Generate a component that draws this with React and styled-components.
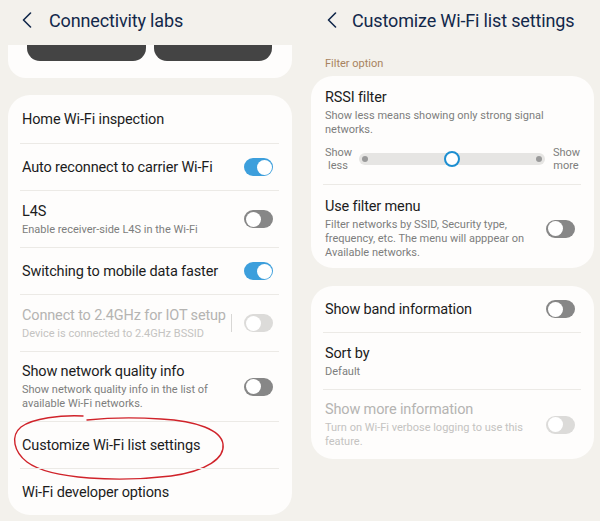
import React from 'react';
import styled, { createGlobalStyle } from 'styled-components';

/* CSS---------------------------------------------------------------------*/
const GlobalStyle = createGlobalStyle`
  html, body {
    margin: 0;
    padding: 0;
    background: #f3f1ec;
  }
  body {
    font-family: Roboto, "Noto Sans", sans-serif;
    -webkit-font-smoothing: antialiased;
  }
`;

const Screen = styled.div`
  display: flex;
  align-items: flex-start;
  width: 600px;
  height: 521px;
  overflow: hidden;
  background: #f3f1ec;
`;

const Panel = styled.section`
  width: 300px;
  flex: none;
  padding: ${p => p.right ? '0 6px 0 11px' : '0 8px'};
  box-sizing: border-box;
`;

const Header = styled.header`
  display: flex;
  align-items: center;
  height: 40px;
  padding-left: ${p => p.right ? '16px' : '14px'};
  gap: ${p => p.right ? '15px' : '17px'};
  color: #12284a;
  font-size: 18px;
  letter-spacing: -0.15px;
`;

const Back = styled.svg`
  width: 10px;
  height: 16px;
  flex: none;
`;

const Card = styled.div`
  background: #fefdfc;
  border-radius: 22px;
  display: flex;
  flex-direction: column;
  margin-top: ${p => p.mt || 0}px;
`;

const TopCard = styled.div`
  background: #fefdfc;
  border-radius: 0 0 18px 18px;
  height: 33px;
  margin-top: 5px;
  display: flex;
  gap: 8px;
  padding: 0 20px 0 19px;
`;

const DarkButton = styled.div`
  flex: 1;
  height: 16px;
  background: #444444;
  border-radius: 0 0 13px 13px;
`;

const Row = styled.div`
  position: relative;
  display: flex;
  align-items: center;
  margin: 0 13px 0 12px;
  padding: ${p => p.pad || '10px 2px'};
  min-height: ${p => p.h || 47}px;
  box-sizing: border-box;
  border-top: ${p => p.first ? 'none' : '1px solid #eceae6'};
  gap: 10px;
`;

const Text = styled.div`
  flex: 1;
  min-width: 0;
`;

const Title = styled.div`
  font-size: 14.5px;
  line-height: 19px;
  letter-spacing: -0.15px;
  white-space: nowrap;
  color: ${p => p.disabled ? '#b5b4b2' : '#1c1c1c'};
`;

const Sub = styled.div`
  font-size: 11px;
  line-height: 14px;
  margin-top: 2px;
  color: ${p => p.disabled ? '#c4c3c1' : '#7d7d7d'};
`;

const Section = styled.div`
  font-size: 11px;
  color: #a88360;
  padding: 17px 0 6px 14px;
`;

const Track = styled.div`
  flex: none;
  position: relative;
  width: 29px;
  height: 18px;
  border-radius: 9px;
  margin-right: 4px;
  background: ${p => p.on ? '#3d9fdc' : p.disabled ? '#dcdbd9' : '#878787'};
`;

const Knob = styled.div`
  position: absolute;
  top: 1.5px;
  left: ${p => p.on ? '12.5px' : '1.5px'};
  width: 15px;
  height: 15px;
  border-radius: 50%;
  background: #ffffff;
`;

const Sep = styled.div`
  flex: none;
  width: 1px;
  height: 18px;
  background: #d8d7d5;
  margin-right: 2px;
`;

const SliderRow = styled.div`
  display: flex;
  align-items: center;
  gap: 8px;
  padding: 9px 0 12px;
`;

const SlideLabel = styled.div`
  font-size: 11px;
  line-height: 13px;
  color: #7d7d7d;
  text-align: center;
  width: 26px;
`;

const SlideTrack = styled.div`
  flex: 1;
  position: relative;
  height: 12px;
  border-radius: 6px;
  background: #e6e5e3;
  display: flex;
  align-items: center;
  justify-content: space-between;
  padding: 0 3px;
`;

const Dot = styled.div`
  width: 6px;
  height: 6px;
  border-radius: 50%;
  background: #9a9a9a;
`;

const Thumb = styled.div`
  position: absolute;
  left: 50%;
  top: 50%;
  width: 12px;
  height: 12px;
  margin: -8px 0 0 -8px;
  border-radius: 50%;
  background: #ffffff;
  border: 2px solid #1d8fd1;
`;

const Circle = styled.svg`
  position: absolute;
  left: -9px;
  top: -8px;
  pointer-events: none;
`;
/*-------------------------------------------------------------------------*/

/* Functions---------------------------------------------------------------*/
const BackIcon = () => (
  <Back viewBox="0 0 10 16">
    <polyline points="8.5,1 1.5,8 8.5,15" fill="none" stroke="#12284a" strokeWidth="1.6" strokeLinecap="round" strokeLinejoin="round" />
  </Back>
);

const Toggle = ({ on, disabled }) => (
  <Track on={on} disabled={disabled}>
    <Knob on={on} />
  </Track>
);

const Setting = ({ title, sub, toggle, on, disabled, sep, first, h, pad }) => (
  <Row first={first} h={h} pad={pad}>
    <Text>
      <Title disabled={disabled}>{title}</Title>
      {sub && <Sub disabled={disabled}>{sub}</Sub>}
    </Text>
    {sep && <Sep />}
    {toggle && <Toggle on={on} disabled={disabled} />}
  </Row>
);
/*-------------------------------------------------------------------------*/

/* Render------------------------------------------------------------------*/
const App = () => (
  <Screen>
    <GlobalStyle />

    <Panel>
      <Header>
        <BackIcon />
        <span>Connectivity labs</span>
      </Header>
      <TopCard>
        <DarkButton />
        <DarkButton />
      </TopCard>
      <Card mt={17}>
        <Setting first h={48} title="Home Wi-Fi inspection" />
        <Setting title="Auto reconnect to carrier Wi-Fi" toggle on />
        <Setting h={57} title="L4S" sub="Enable receiver-side L4S in the Wi-Fi" toggle />
        <Setting title="Switching to mobile data faster" toggle on />
        <Setting h={57} title="Connect to 2.4GHz for IOT setup" sub="Device is connected to 2.4GHz BSSID" toggle disabled sep />
        <Setting h={70} title="Show network quality info" sub="Show network quality info in the list of available Wi-Fi networks." toggle />
        <Row>
          <Text>
            <Title>Customize Wi-Fi list settings</Title>
          </Text>
          <Circle width="220" height="70" viewBox="0 0 220 70">
            <path
              d="M72 2 C50 1 22 4 10 13 C-1 22 3 38 16 48 C40 66 110 68 160 62 C196 57 214 44 212 30 C210 16 186 7 150 5 C120 3 95 4 76 6"
              fill="none" stroke="#d0232a" strokeWidth="1.4" strokeLinecap="round" />
          </Circle>
        </Row>
        <Setting title="Wi-Fi developer options" />
      </Card>
    </Panel>

    <Panel right>
      <Header right>
        <BackIcon />
        <span>Customize Wi-Fi list settings</span>
      </Header>
      <Section>Filter option</Section>
      <Card>
        <Row first h={50} pad="12px 2px 0">
          <Text>
            <Title>RSSI filter</Title>
            <Sub>Show less means showing only strong signal networks.</Sub>
          </Text>
        </Row>
        <Row first h={0} pad="0 2px">
          <Text>
            <SliderRow>
              <SlideLabel>Show less</SlideLabel>
              <SlideTrack>
                <Dot />
                <Thumb />
                <Dot />
              </SlideTrack>
              <SlideLabel>Show more</SlideLabel>
            </SliderRow>
          </Text>
        </Row>
        <Setting h={80} pad="12px 2px 8px" title="Use filter menu" sub="Filter networks by SSID, Security type, frequency, etc. The menu will apppear on Available networks." toggle />
      </Card>
      <Card mt={18}>
        <Setting first h={46} title="Show band information" toggle />
        <Setting h={57} title="Sort by" sub="Default" />
        <Setting h={70} title="Show more information" sub="Turn on Wi-Fi verbose logging to use this feature." toggle disabled />
      </Card>
    </Panel>
  </Screen>
);
/*-------------------------------------------------------------------------*/

export default App;
